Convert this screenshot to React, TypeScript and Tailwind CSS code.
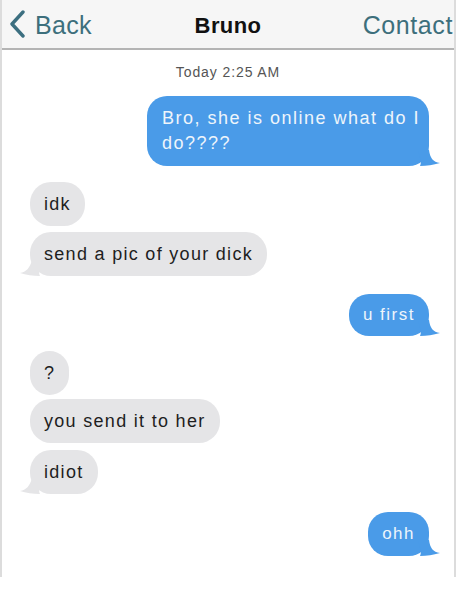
import React from "react";

const font = { fontFamily: '"Liberation Sans", Arial, sans-serif' } as React.CSSProperties;

function BlueTail() {
  return (
    <svg className="absolute -right-[11px] bottom-0" width="22" height="16" viewBox="0 0 22 16">
      <path d="M0 0 C2 8 4 12 2 16 C9 16 15 15 22 13 C15 12 12 8 11 0 Z" fill="#4a9be8" />
    </svg>
  );
}

function GrayTail() {
  return (
    <svg className="absolute -left-[10px] bottom-0" width="22" height="16" viewBox="0 0 22 16">
      <path d="M22 0 C20 8 18 12 20 16 C13 16 6 15 0 13 C6 12 10 8 12 0 Z" fill="#e5e5e7" />
    </svg>
  );
}

function Gray({ text, tail, className = "" }: { text: string; tail?: boolean; className?: string }) {
  return (
    <div className={`relative shrink-0 self-start ml-[28px] bg-[#e5e5e7] rounded-[21px] px-[14px] h-[44px] flex items-center whitespace-nowrap text-[18px] tracking-[1.3px] text-[#1e1e1e] ${className}`}>
      <span className="relative z-10">{text}</span>
      {tail && <GrayTail />}
    </div>
  );
}

function Blue({ children, className = "" }: { children: React.ReactNode; className?: string }) {
  return (
    <div className={`relative shrink-0 self-end mr-[25px] bg-[#4a9be8] rounded-[20px] whitespace-nowrap text-[#eef5fb] ${className}`}>
      <div className="relative z-10">{children}</div>
      <BlueTail />
    </div>
  );
}

export default function App() {
  return (
    <div className="w-[460px] h-[593px] bg-white overflow-hidden" style={font}>
      <div className="h-[577px] border-l-2 border-r-2 border-[#dcdcdc] w-[456px] flex flex-col bg-white">
        <div className="h-[50px] shrink-0 bg-[#f6f6f6] border-b-2 border-[#b4b4b4] flex items-center relative">
          <svg className="absolute left-[7px] top-[10px]" width="18" height="28" viewBox="0 0 18 28">
            <path d="M14 2 L3 14 L14 26" fill="none" stroke="#3c6f80" strokeWidth="3.4" strokeLinecap="round" strokeLinejoin="round" />
          </svg>
          <span className="absolute left-[33px] top-[7px] text-[25px] tracking-[0.3px] text-[#3d6f7c]">Back</span>
          <span className="absolute left-0 right-0 top-[9px] text-center font-bold text-[22px] tracking-[0.4px] text-[#111]">Bruno</span>
          <span className="absolute right-[1px] top-[7px] text-[25px] tracking-[0.6px] text-[#3d6f7c]">Contact</span>
        </div>
        <div className="shrink-0 text-center text-[14px] tracking-[0.9px] text-[#555] mt-[14px] leading-[16px]">Today 2:25 AM</div>
        <div className="flex flex-col mt-[16px]">
          <Blue className="w-[282px] pl-[15px] pr-[6px] py-[10px] leading-[25px] text-[18px] tracking-[1.5px]">
            Bro, she is online what do I
            <br />
            do????
          </Blue>
          <Gray text="idk" className="mt-[16px]" />
          <Gray text="send a pic of your dick" tail className="mt-[6px]" />
          <Blue className="mt-[18px] h-[42px] px-[14px] flex items-center text-[17px] tracking-[1.5px]">u first</Blue>
          <Gray text="?" className="mt-[15px]" />
          <Gray text="you send it to her" className="mt-[4px]" />
          <Gray text="idiot" tail className="mt-[7px]" />
          <Blue className="mt-[18px] h-[44px] px-[14px] flex items-center text-[17px] tracking-[1.5px]">ohh</Blue>
        </div>
      </div>
    </div>
  );
}
